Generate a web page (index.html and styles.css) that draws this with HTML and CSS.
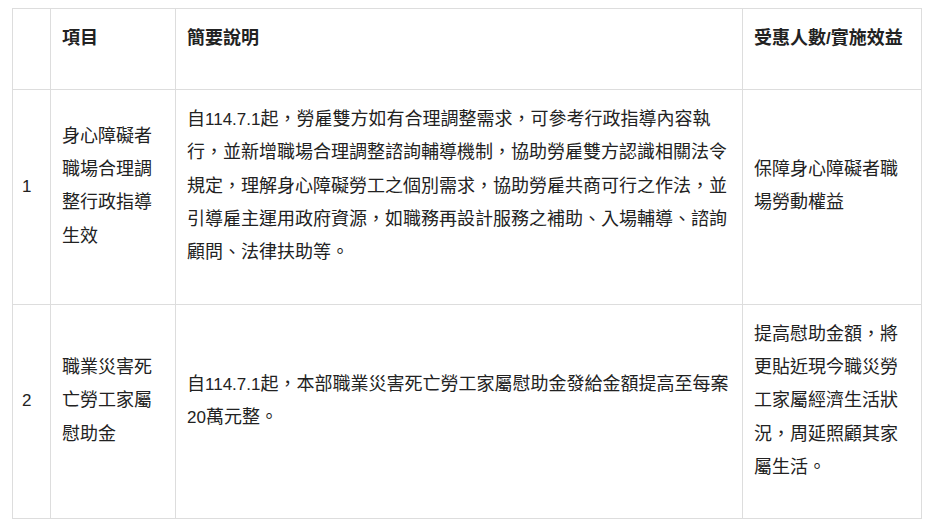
FILE: index.html
```html
<!DOCTYPE html>
<html lang="zh-Hant">
<head>
<meta charset="utf-8">
<title>表</title>
<link rel="stylesheet" href="styles.css">
</head>
<body>
<div class="wrap">
<table class="policy">
<colgroup>
<col class="c-no">
<col class="c-item">
<col class="c-desc">
<col class="c-benefit">
</colgroup>
<thead>
<tr>
<th><p>&nbsp;</p></th>
<th><p>項目</p></th>
<th><p>簡要說明</p></th>
<th><p>受惠人數<span class="num">/</span>實施效益</p></th>
</tr>
</thead>
<tbody>
<tr>
<td class="no"><p><span class="num">1</span></p></td>
<td><p>身心障礙者職場合理調整行政指導生效</p></td>
<td><p>自<span class="num">114.7.1</span>起，勞雇雙方如有合理調整需求，可參考行政指導內容執行，並新增職場合理調整諮詢輔導機制，協助勞雇雙方認識相關法令規定，理解身心障礙勞工之個別需求，協助勞雇共商可行之作法，並引導雇主運用政府資源，如職務再設計服務之補助、入場輔導、諮詢顧問、法律扶助等。</p></td>
<td><p>保障身心障礙者職場勞動權益</p></td>
</tr>
<tr>
<td class="no"><p><span class="num">2</span></p></td>
<td><p>職業災害死亡勞工家屬慰助金</p></td>
<td><p>自<span class="num">114.7.1</span>起，本部職業災害死亡勞工家屬慰助金發給金額提高至每案<span class="num">20</span>萬元整。</p></td>
<td><p>提高慰助金額，將更貼近現今職災勞工家屬經濟生活狀況，周延照顧其家屬生活。</p></td>
</tr>
</tbody>
</table>
</div>
</body>
</html>
```

FILE: styles.css
```css
html, body {
  margin: 0;
  padding: 0;
  background: #ffffff;
}

body {
  font-family: "Liberation Sans", Arial, "Noto Sans CJK TC", sans-serif;
  font-size: 18px;
  color: #222222;
}

.num {
  font-size: 17px;
}

.wrap {
  padding: 8px 0 0 12px;
}

.policy {
  border-collapse: collapse;
  table-layout: fixed;
  width: 909px;
}

.c-no { width: 38px; }
.c-item { width: 125px; }
.c-desc { width: 567px; }
.c-benefit { width: 179px; }

.policy th,
.policy td {
  border: 1px solid #dddddd;
  padding: 13px 13px 13px 11px;
  vertical-align: middle;
  text-align: left;
  line-height: 33.33px;
}

.policy th {
  font-weight: bold;
}

.policy td.no,
.policy th:first-child {
  padding-left: 9px;
  padding-right: 8px;
}

.policy p {
  margin: 0 0 20.8px 0;
}
```
